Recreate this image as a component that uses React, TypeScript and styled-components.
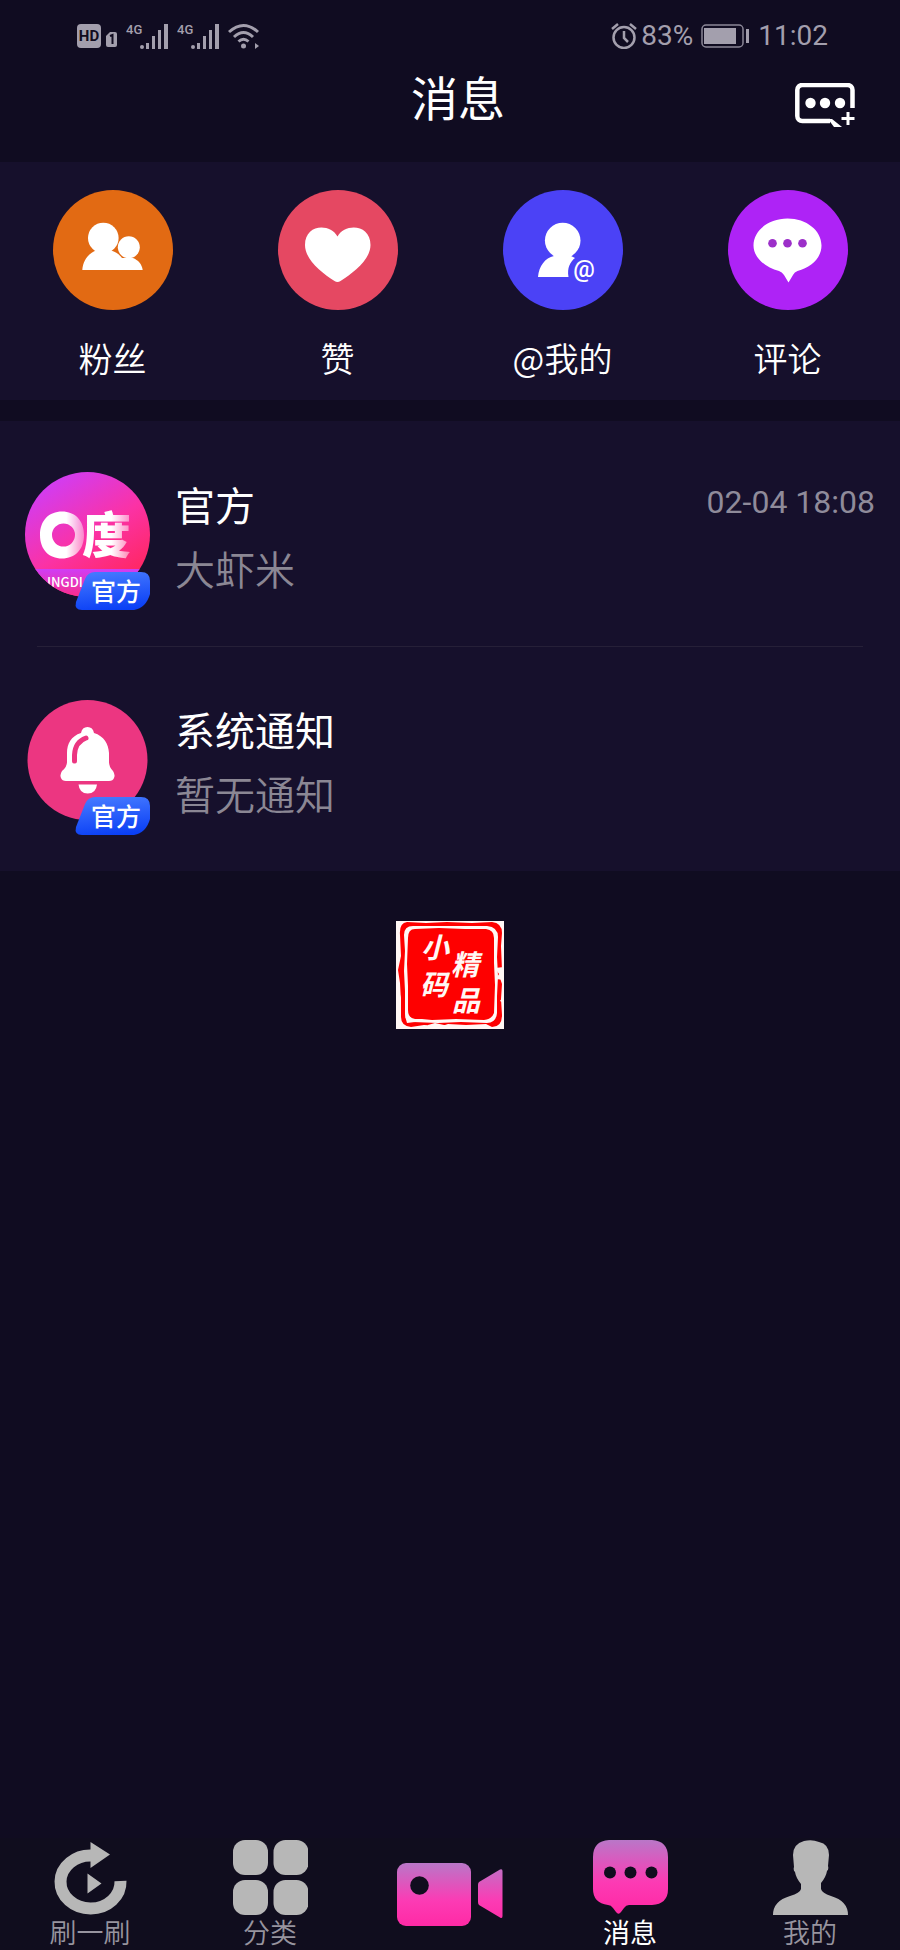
import React from "react";
import styled, { createGlobalStyle } from "styled-components";

const GlobalStyle = createGlobalStyle`
  * { box-sizing: border-box; }
  body {
    margin: 0;
    background: #100c21;
    font-family: "Noto Sans CJK SC", sans-serif;
  }
  button {
    border: 0;
    padding: 0;
    background: none;
    color: inherit;
    font: inherit;
    cursor: pointer;
  }
  svg { display: block; flex: none; }
`;

const Screen = styled.div`
  display: flex;
  flex-direction: column;
  min-height: 100vh;
  background: #100c21;
  color: #fff;
`;

const StatusBar = styled.div`
  display: flex;
  align-items: center;
  justify-content: space-between;
  height: 48px;
  margin-top: 12px;
  padding: 0 72px 0 77px;
  color: #a39fad;
  font: 28px/48px Roboto, sans-serif;
`;

const StatusGroup = styled.div<{ $gap: number }>`
  display: flex;
  align-items: center;
  gap: ${(p) => p.$gap}px;
`;

const TitleBar = styled.header`
  display: grid;
  grid-template-columns: 1fr auto 1fr;
  align-items: center;
  padding: 0 45px 30px 61px;
`;

const Title = styled.h1`
  grid-column: 2;
  margin: 0;
  font-size: 47px;
  font-weight: 400;
  line-height: 72px;
`;

const ComposeButton = styled.button`
  justify-self: end;
  && { padding-top: 18px; }
`;

const Categories = styled.nav`
  display: grid;
  grid-template-columns: repeat(4, 1fr);
  padding: 28px 0 18px;
  background: #16102c;
`;

const Category = styled.button`
  display: flex;
  flex-direction: column;
  align-items: center;
  gap: 24px;
`;

const CategoryIcon = styled.span<{ $color: string }>`
  width: 120px;
  height: 120px;
  border-radius: 50%;
  background: ${(p) => p.$color};
`;

const CategoryLabel = styled.span`
  font-size: 34px;
  font-weight: 350;
  line-height: 48px;
`;

const Conversations = styled.ul`
  margin: 21px 0 0;
  padding: 1px 0 0;
  list-style: none;
  background: #16102c;
`;

const Conversation = styled.li`
  & + & > hr { display: block; }
`;

const Divider = styled.hr`
  display: none;
  height: 1px;
  margin: 0 37px;
  border: 0;
  background: #262038;
`;

const ConversationButton = styled.button`
  display: flex;
  align-items: flex-start;
  gap: 25px;
  width: 100%;
  text-align: left;
  && { padding: 50px 25px 36px; }
`;

const Summary = styled.span`
  display: flex;
  flex: 1;
  flex-direction: column;
  font-size: 40px;
  font-weight: 400;
  line-height: 64px;
`;

const Preview = styled.span`
  color: #8b8794;
  font-weight: 350;
`;

const Time = styled.time`
  color: #8f8b9a;
  font: 32px/60px Roboto, sans-serif;
`;

const Content = styled.main`
  display: flex;
  flex: 1;
  flex-direction: column;
`;

const StampArea = styled.div`
  display: flex;
  justify-content: center;
  padding-top: 50px;
`;

const TabBar = styled.nav`
  display: grid;
  grid-template-columns: repeat(5, 1fr);
  padding: 2px 0 1px;
  background: #100d1e;
`;

const Tab = styled.button<{ $active?: boolean }>`
  display: flex;
  flex-direction: column;
  align-items: center;
  justify-content: center;
  && {
    color: ${(p) => (p.$active ? "#fff" : "#97949f")};
    font-weight: ${(p) => (p.$active ? 400 : 350)};
  }
`;

const TabLabel = styled.span`
  font-size: 27px;
  line-height: 34px;
`;

const HdIcon = () => (
  <svg width="41" height="26" viewBox="0 0 41 26" fill="#a39fad">
    <rect y="1" width="24" height="24" rx="4" />
    <text x="12" y="18" textAnchor="middle" fontFamily="Roboto" fontSize="15" fontWeight="700" fill="#110c20">HD</text>
    <path d="M29 13l4-4h5a2 2 0 0 1 2 2v11a2 2 0 0 1-2 2h-7a2 2 0 0 1-2-2z" />
    <path d="M33 13l2.500-1v9" fill="none" stroke="#110c20" strokeWidth="2" />
  </svg>
);

const SignalIcon = () => (
  <svg width="43" height="32" viewBox="0 -3 43 32" fill="#a39fad">
    <text x="0" y="11" fontFamily="Roboto" fontSize="13" fontWeight="500">4G</text>
    <circle cx="16" cy="24" r="2" />
    <path d="M20 20h3v6h-3zM26 13h3v13h-3zM32 7h3v19h-3zM38 1h4v25h-4z" />
  </svg>
);

const WifiIcon = () => (
  <svg width="32" height="26" viewBox="0 0 32 26" fill="none" stroke="#a39fad" strokeWidth="3">
    <path d="M1 9Q15.500-4 30 9M6 14Q15.500 5 25 14M10.500 18.500Q15.500 14 20.500 18.500" />
    <circle cx="15.500" cy="23" r="2.500" fill="#a39fad" stroke="none" />
    <path d="M27 20v6l4-3z" fill="#a39fad" stroke="none" />
  </svg>
);

const AlarmIcon = () => (
  <svg width="26" height="26" viewBox="0 0 26 26" fill="none" stroke="#a39fad" strokeWidth="2.500">
    <circle cx="13" cy="14.500" r="10.500" />
    <path d="M1 6l6-5M25 6l-6-5M13 8v7l4 4" />
  </svg>
);

const BatteryIcon = () => (
  <svg width="49" height="24" viewBox="0 0 49 24">
    <rect x="1" y="1" width="41" height="22" rx="4" fill="none" stroke="#8b8797" strokeWidth="1.500" />
    <path d="M3 4h32v16H3zM45 5h3v14h-3z" fill="#a39fad" />
  </svg>
);

const ComposeIcon = () => (
  <svg width="60" height="45" viewBox="0 0 60 45" fill="none" stroke="#fff" strokeWidth="4.500">
    <path d="M57.500 25V7a5 5 0 0 0-5-5H7.300A5 5 0 0 0 2.300 7v26a5 5 0 0 0 5 5H35" />
    <path d="M33 36l4 0 10 8h-8z" fill="#fff" stroke="none" />
    <g fill="#fff" stroke="none">
      <circle cx="15.500" cy="20" r="5.200" />
      <circle cx="30" cy="20" r="5.200" />
      <circle cx="45" cy="20" r="5.200" />
    </g>
    <path d="M53 29v13M46.500 35.500h13" strokeWidth="3" />
  </svg>
);

const FansIcon = () => (
  <svg width="120" height="120" viewBox="0 0 120 120" fill="#fff">
    <circle cx="50.300" cy="48" r="15.300" />
    <circle cx="75.800" cy="57.200" r="11" />
    <path d="M29.300 80C30 70 36 63 43 60.500h15C63 62 67 65 69 68h11C85 70 89 74 89.700 80z" />
  </svg>
);

const HeartIcon = () => (
  <svg width="120" height="120" viewBox="0 0 120 120" fill="#fff">
    <path d="M59.500 46.500C67 33 92.500 34 92.500 55C92.500 70 75 83 62.500 91Q59.500 93 56.500 91C44 83 27 70 27 55C27 34 52 33 59.500 46.500z" />
  </svg>
);

const MentionIcon = () => (
  <svg width="120" height="120" viewBox="0 0 120 120" fill="#fff">
    <circle cx="59.700" cy="50.500" r="17.800" />
    <path d="M35 87C36 76 42 68 51 66h17l4 2C67 72 64 78 65.500 87z" />
    <text x="81" y="87" textAnchor="middle" fontFamily="Roboto" fontSize="24" fontWeight="500">@</text>
  </svg>
);

const CommentIcon = () => (
  <svg width="120" height="120" viewBox="0 0 120 120">
    <path d="M59.500 28.500c19 0 34 12 34 27 0 12-10 22-24 25.500q-3 1-4.500 4l-4.500 7.500-4.500-7.500q-2-3-5-4c-14-3.500-25.500-13.500-25.500-25.500 0-15 15-27 34-27z" fill="#fff" />
    <g fill="#9c2fc9">
      <circle cx="44.500" cy="53.300" r="4.300" />
      <circle cx="59.500" cy="53.300" r="4.300" />
      <circle cx="74.500" cy="53.300" r="4.300" />
    </g>
  </svg>
);

const OfficialBadge = ({ id }: { id: string }) => (
  <g>
    <defs>
      <linearGradient id={id} x1="0.400" y1="0" x2="0.600" y2="1">
        <stop offset="0" stopColor="#4478ff" />
        <stop offset="1" stopColor="#0a3ff5" />
      </linearGradient>
    </defs>
    <path d="M70 100H116Q125 100 125 109V122Q121 136 109 138H57Q49 138 51 130L60 107Q63 100 70 100z" fill={`url(#${id})`} />
    <text x="91" y="129" textAnchor="middle" fontSize="25" fontWeight="500" fill="#fff">官方</text>
  </g>
);

const LogoAvatar = () => (
  <svg width="125" height="138" viewBox="0 0 125 138">
    <defs>
      <linearGradient id="logoFill" x1="0.200" y1="0.050" x2="0.750" y2="0.900">
        <stop offset="0" stopColor="#cf3df6" />
        <stop offset="0.550" stopColor="#fb32a5" />
        <stop offset="1" stopColor="#ff2763" />
      </linearGradient>
      <linearGradient id="logoBand" x1="0" y1="0" x2="0" y2="1">
        <stop offset="0" stopColor="#cf3df6" />
        <stop offset="1" stopColor="#fb2c8a" />
      </linearGradient>
      <linearGradient id="ringFade" x1="0" y1="0" x2="1" y2="0">
        <stop offset="0.600" stopColor="#fff" />
        <stop offset="1" stopColor="#fff" stopOpacity="0.400" />
      </linearGradient>
      <clipPath id="logoClip"><circle cx="62.500" cy="62.500" r="62.500" /></clipPath>
    </defs>
    <g clipPath="url(#logoClip)">
      <rect width="125" height="125" fill="url(#logoFill)" />
      <rect y="97" width="125" height="28" fill="url(#logoBand)" />
      <path fillRule="evenodd" d="M37 39.500c13 0 22 9 22 23.500s-9 23.500-22 23.500S15 77.500 15 63s9-23.500 22-23.500zm1.500 12a11.500 11.500 0 1 0 0 23 11.500 11.500 0 0 0 0-23z" fill="url(#ringFade)" />
      <text x="57" y="81" fontSize="49" fontWeight="900" fill="url(#ringFade)">度</text>
      <text x="22" y="115" fontSize="13" fontWeight="500" fill="#fff">INGDI</text>
    </g>
    <OfficialBadge id="logoBadge" />
  </svg>
);

const BellAvatar = () => (
  <svg width="125" height="138" viewBox="0 0 125 138">
    <circle cx="62.500" cy="63" r="60" fill="#ec3681" />
    <path d="M56 36Q57 30 62.500 30T69 36C79 39 83.500 47 84 56V65Q84 70 88 74Q90.500 78 89 81Q88 84 84 84H41Q37 84 36 81Q34.500 78 37 74Q42 70 42 65V56C42 47 46 39 56 36z" fill="#fff" />
    <path d="M49.500 64V58Q50 45 61 41" fill="none" stroke="#ec3681" strokeWidth="5" strokeLinecap="round" />
    <path d="M53.500 87.500h18.500q-1 9-9.300 9t-9.200-9z" fill="#fff" />
    <OfficialBadge id="bellBadge" />
  </svg>
);

const Stamp = () => (
  <svg width="108" height="108" viewBox="0 0 108 108" role="img" aria-label="小码精品">
    <rect width="108" height="108" fill="#fff8f5" />
    <path d="M11 1L30 2 51 1 76 2 96 1Q106 2 106 12L105 25 106 49 103 54 106 63 105 78 106 94Q106 106 96 106L90 103 70 104 52 103 46 105 28 104 15 106Q5 105 5 96L5 80 4 62 2 49 5 35 4 14Q3 2 11 1z" fill="#fe0000" />
    <path d="M17 5L43 5 67 5 91 5Q102 6 102 16L101 36 102 55 101 75 101 92Q100 102 91 102L65 101 42 102 17 101Q9 101 9 93L9 70 8 50 9 30 8 14Q8 5 17 5z" fill="#fff8f5" />
    <path d="M19 8L43 7 69 8 90 8Q98 9 98 17L98 42 99 64 98 92Q96 98 88 99L60 98 36 99 26 98 19 98Q12 97 12 89L12 65 11 43 12 17Q12 8 19 8z" fill="#fe0000" />
    <g fill="#fff8f5">
      <path d="M1 2l7-2-6 8zM99 47l9-1v13l-8-1 3-5zM1 64l4 13v29H1zM32 104l7-2 9 2 18 1 16-1v3H32zM104 80l4-6v8zM9 95l4 4 6 2-8 1z" />
      <g fontSize="28" fontWeight="700" fontStyle="italic">
        <text x="25" y="37">小</text>
        <text x="24" y="74">码</text>
        <text x="55" y="54">精</text>
        <text x="56" y="90">品</text>
      </g>
    </g>
  </svg>
);

const RefreshIcon = () => (
  <svg width="75" height="75" viewBox="0 0 75 75" fill="#b7b7b7">
    <path d="M39 15.500A30 26.500 0 1 0 67.500 41" fill="none" stroke="#b7b7b7" strokeWidth="12" />
    <path d="M37.500 2L57 14.500 37.500 28zM34.500 33.500l14 10-14 10z" />
  </svg>
);

const GridIcon = () => (
  <svg width="75" height="75" viewBox="0 0 75 75" fill="#b7b7b7">
    <rect width="35" height="35" rx="12" />
    <rect x="40.500" width="35" height="35" rx="12" />
    <rect y="40" width="35" height="35" rx="12" />
    <rect x="40.500" y="40" width="35" height="35" rx="12" />
  </svg>
);

const PinkGradient = ({ id, height }: { id: string; height: number }) => (
  <defs>
    <linearGradient id={id} gradientUnits="userSpaceOnUse" x1="0" y1="0" x2="0" y2={height}>
      <stop offset="0" stopColor="#b977c8" />
      <stop offset="0.600" stopColor="#fc3bb4" />
      <stop offset="1" stopColor="#ff2aa5" />
    </linearGradient>
  </defs>
);

const VideoIcon = () => (
  <svg width="106" height="63" viewBox="0 0 106 63" fill="url(#videoFill)">
    <PinkGradient id="videoFill" height={63} />
    <rect width="74" height="63" rx="9" />
    <path d="M82 19L103 6.500Q105.500 5.500 105.500 8V53Q105.500 56 103 54.500L82 42Q81 41 81 39V22Q81 20 82 19z" />
    <circle cx="22.500" cy="22.500" r="9.300" fill="#110d1e" />
  </svg>
);

const MessageIcon = () => (
  <svg width="75" height="75" viewBox="0 0 75 75" fill="url(#messageFill)">
    <PinkGradient id="messageFill" height={70} />
    <path d="M16 0H59Q75 1 75 17V49Q75 64 59 65H36Q33 65 31 68L28 72Q25.500 75.500 23 72L20 68Q18 65 15 65Q0 63 0 49V17Q0 1 16 0z" />
    <g fill="#110d1e">
      <circle cx="17" cy="32.500" r="6" />
      <circle cx="37.500" cy="32.500" r="6" />
      <circle cx="58.500" cy="32.500" r="6" />
    </g>
  </svg>
);

const PersonIcon = () => (
  <svg width="75" height="75" viewBox="0 0 75 75" fill="#b7b7b7">
    <path d="M31 1Q39-1 46 2Q56 4 56 15L55 26Q56 29 54 31Q53 37 48 43V49Q49 53 58 56Q75 61 75 75H0Q0 61 17 56Q27 53 28 49V44Q23 38 22 32Q20 30 21 27L20 15Q20 4 31 1z" />
  </svg>
);

const categories = [
  { label: "粉丝", color: "#e26a13", Icon: FansIcon },
  { label: "赞", color: "#e54862", Icon: HeartIcon },
  { label: "@我的", color: "#4b42f6", Icon: MentionIcon },
  { label: "评论", color: "#ae23f6", Icon: CommentIcon },
];

const conversations = [
  { name: "官方", preview: "大虾米", time: "02-04 18:08", Avatar: LogoAvatar },
  { name: "系统通知", preview: "暂无通知", time: "", Avatar: BellAvatar },
];

const tabs = [
  { label: "刷一刷", Icon: RefreshIcon },
  { label: "分类", Icon: GridIcon },
  { label: "", Icon: VideoIcon },
  { label: "消息", Icon: MessageIcon, active: true },
  { label: "我的", Icon: PersonIcon },
];

export default function App() {
  return (
    <Screen>
      <GlobalStyle />
      <StatusBar>
        <StatusGroup $gap={8}>
          <HdIcon />
          <SignalIcon />
          <SignalIcon />
          <WifiIcon />
        </StatusGroup>
        <StatusGroup $gap={8}>
          <StatusGroup $gap={4}>
            <AlarmIcon />
            <span>83%</span>
          </StatusGroup>
          <BatteryIcon />
          <span>11:02</span>
        </StatusGroup>
      </StatusBar>
      <TitleBar>
        <Title>消息</Title>
        <ComposeButton aria-label="发起聊天">
          <ComposeIcon />
        </ComposeButton>
      </TitleBar>
      <Content>
        <Categories>
          {categories.map(({ label, color, Icon }) => (
            <Category key={label}>
              <CategoryIcon $color={color}>
                <Icon />
              </CategoryIcon>
              <CategoryLabel>{label}</CategoryLabel>
            </Category>
          ))}
        </Categories>
        <Conversations>
          {conversations.map(({ name, preview, time, Avatar }) => (
            <Conversation key={name}>
              <Divider />
              <ConversationButton>
                <Avatar />
                <Summary>
                  <span>{name}</span>
                  <Preview>{preview}</Preview>
                </Summary>
                {time && <Time>{time}</Time>}
              </ConversationButton>
            </Conversation>
          ))}
        </Conversations>
        <StampArea>
          <Stamp />
        </StampArea>
      </Content>
      <TabBar>
        {tabs.map(({ label, Icon, active }) => (
          <Tab key={label} $active={active} aria-label={label || "拍摄"} aria-current={active ? "page" : undefined}>
            <Icon />
            {label && <TabLabel>{label}</TabLabel>}
          </Tab>
        ))}
      </TabBar>
    </Screen>
  );
}
